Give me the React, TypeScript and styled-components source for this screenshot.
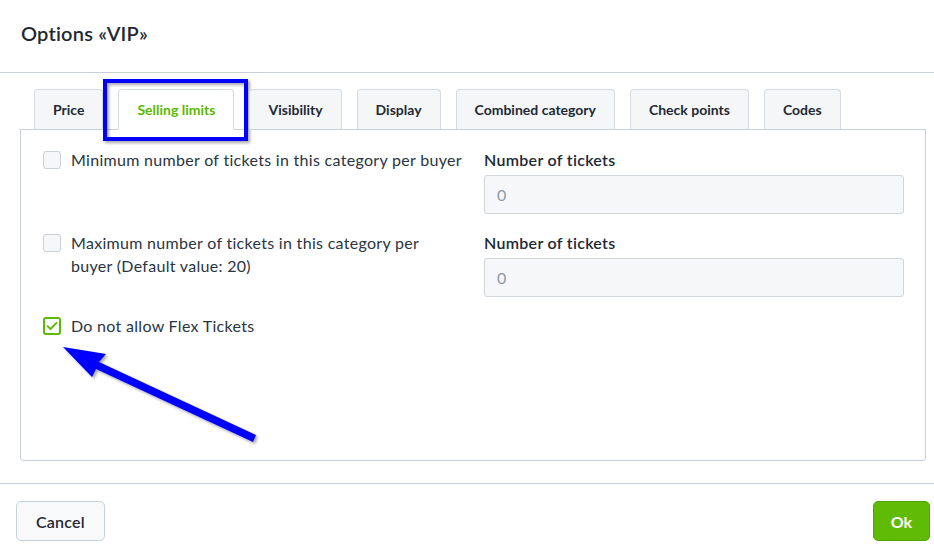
import React from "react";
import styled, { createGlobalStyle } from "styled-components";

const GlobalStyle = createGlobalStyle`
  html, body {
    margin: 0;
    padding: 0;
    background: #ffffff;
  }
  body {
    font-family: "Lato", "Liberation Sans", sans-serif;
    color: #1e2933;
  }
  * {
    box-sizing: border-box;
  }
`;

const tabs = [
  "Price",
  "Selling limits",
  "Visibility",
  "Display",
  "Combined category",
  "Check points",
  "Codes",
];

const App: React.FC = () => {
  return (
    <>
      <GlobalStyle />
      <Page>
        <Header>
          <Title>Options «VIP»</Title>
        </Header>
        <Body>
          <TabRow>
            {tabs.map((t) => (
              <Tab key={t} active={t === "Selling limits"}>
                {t}
              </Tab>
            ))}
          </TabRow>
          <Panel>
            <Row>
              <CheckLine>
                <Checkbox />
                <CheckText>
                  Minimum number of tickets in this category per buyer
                </CheckText>
              </CheckLine>
              <Field>
                <FieldLabel>Number of tickets</FieldLabel>
                <Input placeholder="0" />
              </Field>
            </Row>
            <Row>
              <CheckLine>
                <Checkbox />
                <CheckText>
                  Maximum number of tickets in this category per buyer (Default
                  value: 20)
                </CheckText>
              </CheckLine>
              <Field>
                <FieldLabel>Number of tickets</FieldLabel>
                <Input placeholder="0" />
              </Field>
            </Row>
            <Row>
              <CheckLine>
                <Checkbox checked>
                  <svg width="12" height="10" viewBox="0 0 12 10">
                    <path
                      d="M1.5 5.2 L4.5 8 L10.5 1.8"
                      fill="none"
                      stroke="#5cb800"
                      strokeWidth="1.8"
                      strokeLinecap="round"
                      strokeLinejoin="round"
                    />
                  </svg>
                </Checkbox>
                <CheckText>Do not allow Flex Tickets</CheckText>
              </CheckLine>
            </Row>
          </Panel>
        </Body>
        <Footer>
          <CancelButton>Cancel</CancelButton>
          <OkButton>Ok</OkButton>
        </Footer>
        <Annotations width="934" height="546" viewBox="0 0 934 546">
          <defs>
            <filter id="sh" x="-20%" y="-20%" width="140%" height="140%">
              <feDropShadow dx="2" dy="2" stdDeviation="1.5" floodColor="#000" floodOpacity="0.35" />
            </filter>
          </defs>
          <rect
            x="105"
            y="81"
            width="141"
            height="58"
            fill="none"
            stroke="#0000ff"
            strokeWidth="4"
            filter="url(#sh)"
          />
          <g filter="url(#sh)" fill="#0000ff">
            <polygon points="63,347 106,354 99,362 256,435 253,442 96,369 92,377" />
          </g>
        </Annotations>
      </Page>
    </>
  );
};

export default App;

const Page = styled.div`
  position: relative;
  width: 934px;
  height: 546px;
  display: flex;
  flex-direction: column;
  overflow: hidden;
`;

const Header = styled.div`
  height: 73px;
  padding: 0 21px;
  display: flex;
  align-items: center;
  border-bottom: 1px solid #c8d0d8;
`;

const Title = styled.h1`
  margin: 0 0 6px;
  font-size: 20px;
  font-weight: 600;
  letter-spacing: 0.2px;
  color: #1e2933;
`;

const Body = styled.div`
  padding: 16px 8px 0 20px;
`;

const TabRow = styled.div`
  display: flex;
  gap: 15px;
  padding-left: 14px;
  margin-bottom: -1px;
  position: relative;
  z-index: 1;
`;

const Tab = styled.div<{ active?: boolean }>`
  height: 41px;
  padding: 0 18px;
  display: flex;
  align-items: center;
  font-size: 14px;
  font-weight: 700;
  border: 1px solid #d5dbe1;
  border-bottom: 1px solid ${(p) => (p.active ? "#ffffff" : "#c8d0d8")};
  border-radius: 4px 4px 0 0;
  background: ${(p) => (p.active ? "#ffffff" : "#f5f6f8")};
  color: ${(p) => (p.active ? "#5cb800" : "#1e2933")};
`;

const Panel = styled.div`
  height: 332px;
  border: 1px solid #c8d0d8;
  border-radius: 0 0 3px 3px;
  padding: 18px 22px 0 22px;
  display: flex;
  flex-direction: column;
  gap: 17px;
`;

const Row = styled.div`
  display: grid;
  grid-template-columns: 441px 1fr;
`;

const CheckLine = styled.div`
  display: flex;
  align-items: flex-start;
  gap: 10px;
`;

const Checkbox = styled.span<{ checked?: boolean }>`
  flex: none;
  width: 18px;
  height: 18px;
  margin-top: 3px;
  border-radius: 3px;
  display: flex;
  align-items: center;
  justify-content: center;
  background: ${(p) => (p.checked ? "#ffffff" : "#f5f7f9")};
  border: ${(p) => (p.checked ? "2px solid #5cb800" : "1px solid #c8d0d8")};
`;

const CheckText = styled.span`
  max-width: 393px;
  font-size: 16px;
  line-height: 23px;
  letter-spacing: 0.3px;
  color: #2a3540;
`;

const Field = styled.div`
  display: flex;
  flex-direction: column;
  gap: 4px;
`;

const FieldLabel = styled.div`
  font-size: 16px;
  line-height: 23px;
  font-weight: 600;
  letter-spacing: 0.3px;
  color: #1e2933;
`;

const Input = styled.input`
  height: 39px;
  width: 420px;
  padding: 0 12px;
  font-family: inherit;
  font-size: 16px;
  background: #f5f7f9;
  border: 1px solid #cfd6dc;
  border-radius: 3px;
  outline: none;
  &::placeholder {
    color: #8d9aa6;
  }
`;

const Footer = styled.div`
  margin-top: 22px;
  border-top: 1px solid #c8d0d8;
  padding: 17px 4px 0 16px;
  display: flex;
  justify-content: space-between;
  align-items: flex-start;
`;

const CancelButton = styled.button`
  height: 40px;
  padding: 0 19px;
  font-family: inherit;
  font-size: 16px;
  font-weight: 600;
  letter-spacing: 0.2px;
  color: #1e2933;
  background: #f8f9fa;
  border: 1px solid #c8d0d8;
  border-radius: 5px;
`;

const OkButton = styled.button`
  height: 40px;
  padding: 0 17px;
  font-family: inherit;
  font-size: 16px;
  font-weight: 700;
  color: #ffffff;
  background: #5fbb06;
  border: 1px solid #52a600;
  border-radius: 5px;
`;

const Annotations = styled.svg`
  position: absolute;
  left: 0;
  top: 0;
  pointer-events: none;
`;
